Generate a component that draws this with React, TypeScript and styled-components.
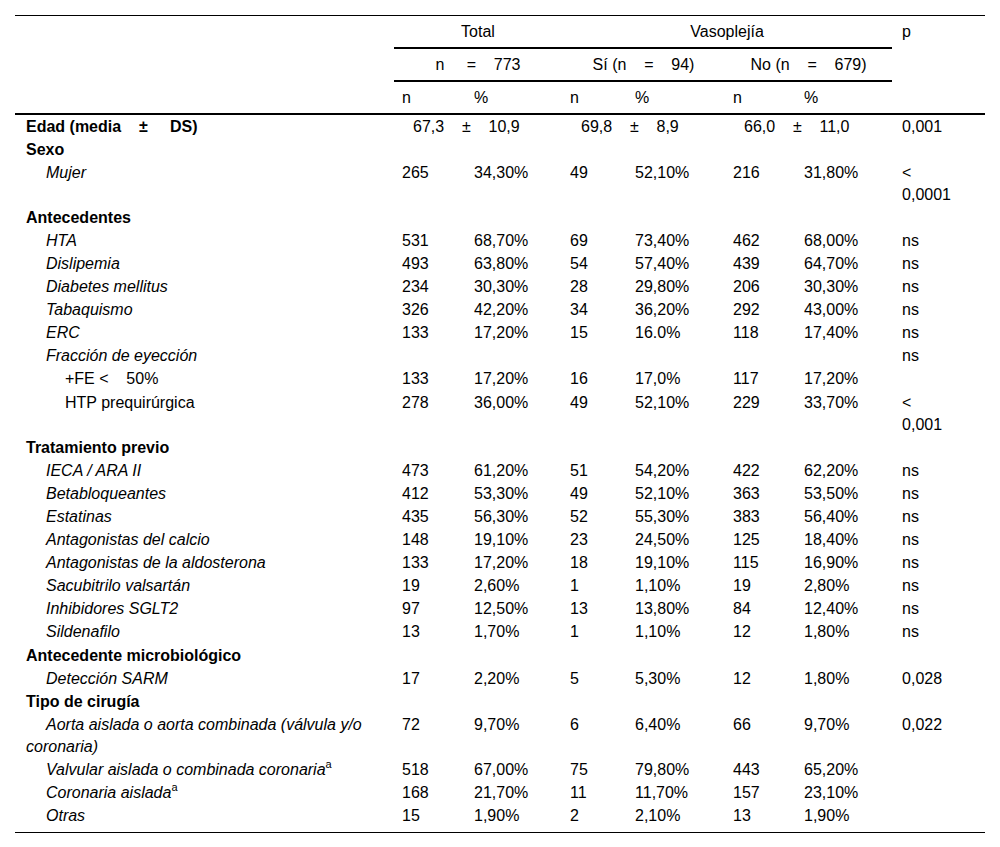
import React from 'react'
import styled, { createGlobalStyle } from 'styled-components'

type Level = 0 | 1 | 2

interface IRow {
  label: string
  level: Level
  kind?: 'section' | 'item' | 'plain'
  sup?: boolean
  cells?: string[]
  p?: string
}

const rows: IRow[] = [
  { label: 'Sexo', level: 0, kind: 'section' },
  { label: 'Mujer', level: 1, cells: ['265', '34,30%', '49', '52,10%', '216', '31,80%'], p: '< 0,0001' },
  { label: 'Antecedentes', level: 0, kind: 'section' },
  { label: 'HTA', level: 1, cells: ['531', '68,70%', '69', '73,40%', '462', '68,00%'], p: 'ns' },
  { label: 'Dislipemia', level: 1, cells: ['493', '63,80%', '54', '57,40%', '439', '64,70%'], p: 'ns' },
  { label: 'Diabetes mellitus', level: 1, cells: ['234', '30,30%', '28', '29,80%', '206', '30,30%'], p: 'ns' },
  { label: 'Tabaquismo', level: 1, cells: ['326', '42,20%', '34', '36,20%', '292', '43,00%'], p: 'ns' },
  { label: 'ERC', level: 1, cells: ['133', '17,20%', '15', '16.0%', '118', '17,40%'], p: 'ns' },
  { label: 'Fracción de eyección', level: 1, cells: ['', '', '', '', '', ''], p: 'ns' },
  { label: '+FE <    50%', level: 2, kind: 'plain', cells: ['133', '17,20%', '16', '17,0%', '117', '17,20%'] },
  { label: 'HTP prequirúrgica', level: 2, kind: 'plain', cells: ['278', '36,00%', '49', '52,10%', '229', '33,70%'], p: '< 0,001' },
  { label: 'Tratamiento previo', level: 0, kind: 'section' },
  { label: 'IECA / ARA II', level: 1, cells: ['473', '61,20%', '51', '54,20%', '422', '62,20%'], p: 'ns' },
  { label: 'Betabloqueantes', level: 1, cells: ['412', '53,30%', '49', '52,10%', '363', '53,50%'], p: 'ns' },
  { label: 'Estatinas', level: 1, cells: ['435', '56,30%', '52', '55,30%', '383', '56,40%'], p: 'ns' },
  { label: 'Antagonistas del calcio', level: 1, cells: ['148', '19,10%', '23', '24,50%', '125', '18,40%'], p: 'ns' },
  { label: 'Antagonistas de la aldosterona', level: 1, cells: ['133', '17,20%', '18', '19,10%', '115', '16,90%'], p: 'ns' },
  { label: 'Sacubitrilo valsartán', level: 1, cells: ['19', '2,60%', '1', '1,10%', '19', '2,80%'], p: 'ns' },
  { label: 'Inhibidores SGLT2', level: 1, cells: ['97', '12,50%', '13', '13,80%', '84', '12,40%'], p: 'ns' },
  { label: 'Sildenafilo', level: 1, cells: ['13', '1,70%', '1', '1,10%', '12', '1,80%'], p: 'ns' },
  { label: 'Antecedente microbiológico', level: 0, kind: 'section' },
  { label: 'Detección SARM', level: 1, cells: ['17', '2,20%', '5', '5,30%', '12', '1,80%'], p: '0,028' },
  { label: 'Tipo de cirugía', level: 0, kind: 'section' },
  {
    label: 'Aorta aislada o aorta combinada (válvula y/o coronaria)',
    level: 1,
    cells: ['72', '9,70%', '6', '6,40%', '66', '9,70%'],
    p: '0,022',
  },
  { label: 'Valvular aislada o combinada coronaria', level: 1, sup: true, cells: ['518', '67,00%', '75', '79,80%', '443', '65,20%'] },
  { label: 'Coronaria aislada', level: 1, sup: true, cells: ['168', '21,70%', '11', '11,70%', '157', '23,10%'] },
  { label: 'Otras', level: 1, cells: ['15', '1,90%', '2', '2,10%', '13', '1,90%'] },
]

const edad = [
  ['67,3', '10,9'],
  ['69,8', '8,9'],
  ['66,0', '11,0'],
]

const colWidths = [379, 72, 96, 65, 98, 71, 96, 93]

const GlobalStyle = createGlobalStyle`
  body {
    margin: 0;
    background: #fff;
  }
`

const Page = styled.div`
  padding: 15px;
  font-family: 'Liberation Sans', Arial, sans-serif;
  font-size: 16px;
  color: #000;
`

const Table = styled.table`
  width: 970px;
  border-collapse: collapse;
  table-layout: fixed;
  border-top: 1px solid #000;
  border-bottom: 1px solid #000;
`

const HeadCell = styled.th<{ $center?: boolean; $rule?: boolean }>`
  padding: 4.5px 8px;
  line-height: 22px;
  font-weight: 400;
  text-align: ${(p) => (p.$center ? 'center' : 'left')};
  vertical-align: top;
  white-space: pre;
  border-bottom: ${(p) => (p.$rule ? '2px solid #000' : 'none')};
`

const Row = styled.tr<{ $last?: boolean }>`
  td {
    padding-bottom: ${(p) => (p.$last ? '5px' : '0.55px')};
  }
`

const Cell = styled.td`
  padding: 0.55px 8px;
  line-height: 22px;
  vertical-align: top;
  text-align: left;
`

const LabelCell = styled(Cell)<{ $level: Level; $kind: 'section' | 'item' | 'plain' }>`
  padding-left: 11px;
  text-indent: ${(p) => (p.$level === 2 ? 39 : p.$level === 1 ? 20 : 0)}px;
  font-weight: ${(p) => (p.$kind === 'section' ? 700 : 400)};
  font-style: ${(p) => (p.$kind === 'item' ? 'italic' : 'normal')};
  white-space: pre-wrap;

  sup {
    font-style: normal;
    font-size: 11px;
    line-height: 0;
    vertical-align: 7px;
  }
`

const StatCell = styled(Cell)`
  padding-left: 19px;
  white-space: pre;
`

const PCell = styled(Cell)`
  padding-left: 10px;
  padding-right: 32px;
`

export default function App() {
  return (
    <Page>
      <GlobalStyle />
      <Table>
        <colgroup>
          {colWidths.map((w, i) => (
            <col key={i} style={{ width: w }} />
          ))}
        </colgroup>
        <thead>
          <tr>
            <HeadCell rowSpan={3} $rule />
            <HeadCell colSpan={2} $center $rule>
              Total
            </HeadCell>
            <HeadCell colSpan={4} $center $rule>
              Vasoplejía
            </HeadCell>
            <HeadCell rowSpan={3} $rule style={{ paddingLeft: 10, paddingTop: 5 }}>
              p
            </HeadCell>
          </tr>
          <tr>
            <HeadCell colSpan={2} $center $rule>
              {'n     =    773'}
            </HeadCell>
            <HeadCell colSpan={2} $center $rule>
              {'Sí (n    =    94)'}
            </HeadCell>
            <HeadCell colSpan={2} $center $rule>
              {'No (n    =    679)'}
            </HeadCell>
          </tr>
          <tr>
            {['n', '%', 'n', '%', 'n', '%'].map((t, i) => (
              <HeadCell key={i} $rule>
                {t}
              </HeadCell>
            ))}
          </tr>
        </thead>
        <tbody>
          <Row>
            <LabelCell $level={0} $kind="section">
              {'Edad (media    ±     DS)'}
            </LabelCell>
            {edad.map(([m, sd], i) => (
              <StatCell key={i} colSpan={2}>
                {`${m}    ±    ${sd}`}
              </StatCell>
            ))}
            <PCell>0,001</PCell>
          </Row>
          {rows.map((r, i) => (
            <Row key={i} $last={i === rows.length - 1}>
              <LabelCell $level={r.level} $kind={r.kind || 'item'}>
                {r.label}
                {r.sup && <sup>a</sup>}
              </LabelCell>
              {r.cells ? (
                <>
                  {r.cells.map((c, j) => (
                    <Cell key={j}>{c}</Cell>
                  ))}
                  <PCell>{r.p || ''}</PCell>
                </>
              ) : (
                <Cell colSpan={7} />
              )}
            </Row>
          ))}
        </tbody>
      </Table>
    </Page>
  )
}
